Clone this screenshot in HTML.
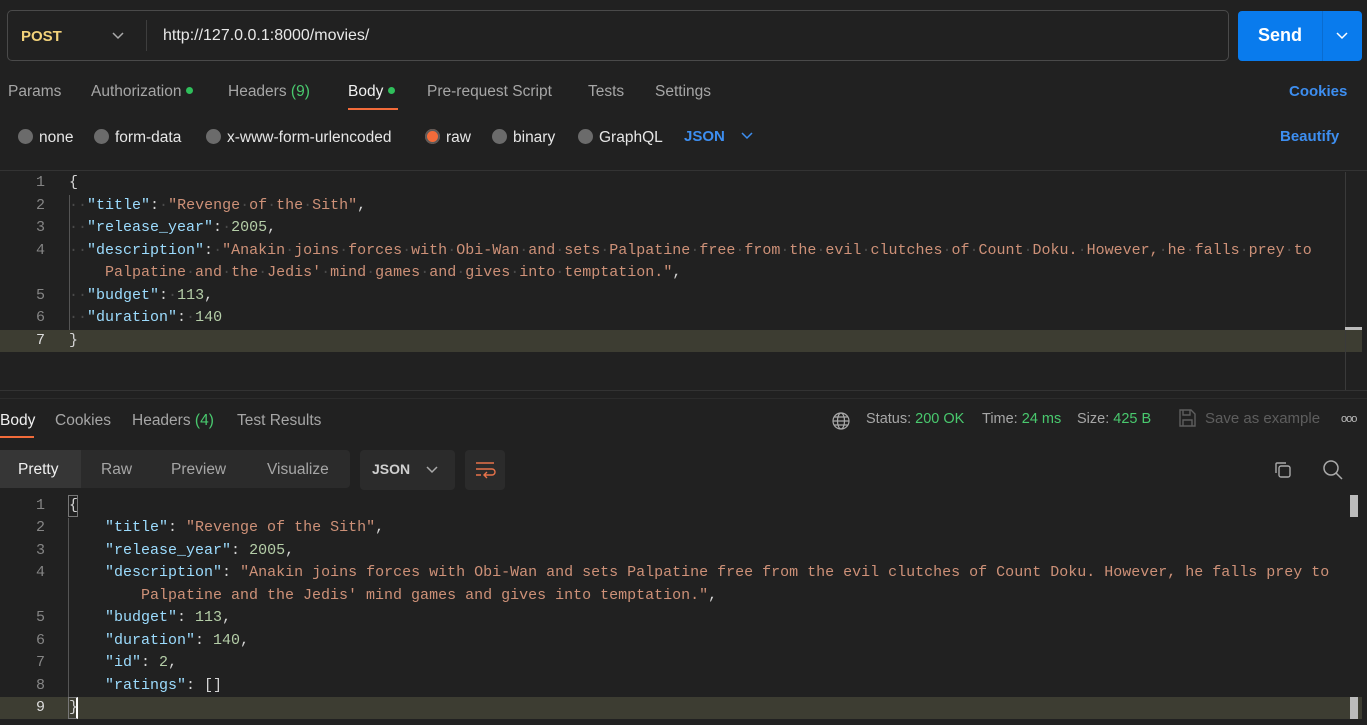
<!DOCTYPE html><html><head><style>
*{margin:0;padding:0;box-sizing:border-box}
body{width:1367px;height:725px;background:#212121;position:relative;overflow:hidden;font-family:"Liberation Sans",sans-serif;color:#a6a6a6;font-size:15.5px}
.a{position:absolute;white-space:pre}
.code{font-family:"Liberation Mono",monospace;font-size:15px;color:#d4d4d4}
.row{position:absolute;left:0;height:22.5px;line-height:22.5px;white-space:pre}
.ln{position:absolute;width:45px;text-align:right;color:#858585;font-family:"Liberation Mono",monospace;font-size:15px;height:22.5px;line-height:22.5px}
.k{color:#9cdcfe}.s{color:#ce9178}.n{color:#b5cea8}.d,.s i{color:#4a4a4a;font-style:normal}
.dot{display:inline-block;width:15px;height:15px;border-radius:50%;background:#6b6b6b;vertical-align:-2px;margin-right:6px}
.g{color:#49c96e}
</style></head><body>
<div class="a" style="left:7px;top:10px;width:1222px;height:51px;border:1px solid #4a4a4a;border-radius:5px"></div>
<div class="a" style="left:21px;top:28px;color:#f2d27a;font-weight:bold;font-size:15px">POST</div>
<svg class="a" style="left:111px;top:31px" width="14" height="10"><path d="M2 2l5 5 5-5" stroke="#aaa" stroke-width="1.5" fill="none"/></svg>
<div class="a" style="left:146px;top:20px;width:1px;height:31px;background:#3e3e3e"></div>
<div class="a" style="left:163px;top:27px;color:#e8e8e8;font-size:16px">http://127.0.0.1:8000/movies/</div>
<div class="a" style="left:1238px;top:11px;width:124px;height:50px;background:#097bed;border-radius:4px"></div>
<div class="a" style="left:1322px;top:11px;width:1px;height:50px;background:#0a6ccf"></div>
<div class="a" style="left:1258px;top:25px;color:#fff;font-weight:bold;font-size:18px">Send</div>
<svg class="a" style="left:1335px;top:31px" width="14" height="10"><path d="M2 2l5 5 5-5" stroke="#fff" stroke-width="1.5" fill="none"/></svg>
<div class="a" style="left:8px;top:83px">Params</div>
<div class="a" style="left:91px;top:83px">Authorization <span class="dot" style="width:7px;height:7px;background:#2fbf5b;vertical-align:2px"></span></div>
<div class="a" style="left:228px;top:83px">Headers <span class="g">(9)</span></div>
<div class="a" style="left:348px;top:83px;color:#f0f0f0">Body <span class="dot" style="width:7px;height:7px;background:#2fbf5b;vertical-align:2px"></span></div>
<div class="a" style="left:348px;top:108px;width:50px;height:2px;background:#f26b3a"></div>
<div class="a" style="left:427px;top:83px">Pre-request Script</div>
<div class="a" style="left:588px;top:83px">Tests</div>
<div class="a" style="left:655px;top:83px">Settings</div>
<div class="a" style="left:1289px;top:83px;color:#3d8ef0;font-weight:bold;font-size:15px">Cookies</div>
<div class="a" style="left:18px;top:129px;color:#e6e6e6"><span class="dot"></span>none</div>
<div class="a" style="left:94px;top:129px;color:#e6e6e6"><span class="dot"></span>form-data</div>
<div class="a" style="left:206px;top:129px;color:#e6e6e6"><span class="dot"></span>x-www-form-urlencoded</div>
<div class="a" style="left:425px;top:129px;color:#e6e6e6"><span class="dot" style="background:#f26b3a;box-shadow:0 0 0 2px #5a5a5a inset"></span>raw</div>
<div class="a" style="left:492px;top:129px;color:#e6e6e6"><span class="dot"></span>binary</div>
<div class="a" style="left:578px;top:129px;color:#e6e6e6"><span class="dot"></span>GraphQL</div>
<div class="a" style="left:684px;top:128px;color:#3d8ef0;font-weight:bold;font-size:15px">JSON</div>
<svg class="a" style="left:740px;top:131px" width="14" height="10"><path d="M2 2l5 5 5-5" stroke="#3d8ef0" stroke-width="1.5" fill="none"/></svg>
<div class="a" style="left:1280px;top:128px;color:#3d8ef0;font-weight:bold;font-size:15px">Beautify</div>
<div class="a" style="left:0;top:170px;width:1367px;height:1px;background:#333"></div>
<div class="a" style="left:0;top:390px;width:1367px;height:1px;background:#333"></div>
<div class="a" style="left:0;top:398px;width:1367px;height:1px;background:#2c2c2c"></div>
<div class="a" style="left:0;top:330px;width:1362px;height:22px;background:#3d3d32"></div>
<div class="a" style="left:1345px;top:172px;width:1px;height:218px;background:#3a3a3a"></div>
<div class="a" style="left:1345px;top:327px;width:17px;height:3px;background:#bbb"></div>
<div class="a" style="left:69px;top:195px;width:1px;height:135px;background:#555"></div>
<div class="code">
<div class="ln" style="top:172px">1</div><div class="ln" style="top:195px">2</div><div class="ln" style="top:217px">3</div><div class="ln" style="top:240px">4</div><div class="ln" style="top:285px">5</div><div class="ln" style="top:307px">6</div><div class="ln" style="top:330px;color:#ddd">7</div>
<div class="row" style="left:69px;top:172px">{</div>
<div class="row" style="left:69px;top:195px"><span class="d">··</span><span class="k">"title"</span>:<span class="d">·</span><span class="s">"Revenge<i>·</i>of<i>·</i>the<i>·</i>Sith"</span>,</div>
<div class="row" style="left:69px;top:217px"><span class="d">··</span><span class="k">"release_year"</span>:<span class="d">·</span><span class="n">2005</span>,</div>
<div class="row" style="left:69px;top:240px"><span class="d">··</span><span class="k">"description"</span>:<span class="d">·</span><span class="s">"Anakin<i>·</i>joins<i>·</i>forces<i>·</i>with<i>·</i>Obi-Wan<i>·</i>and<i>·</i>sets<i>·</i>Palpatine<i>·</i>free<i>·</i>from<i>·</i>the<i>·</i>evil<i>·</i>clutches<i>·</i>of<i>·</i>Count<i>·</i>Doku.<i>·</i>However,<i>·</i>he<i>·</i>falls<i>·</i>prey<i>·</i>to</span></div>
<div class="row" style="left:69px;top:262px">    <span class="s">Palpatine<i>·</i>and<i>·</i>the<i>·</i>Jedis'<i>·</i>mind<i>·</i>games<i>·</i>and<i>·</i>gives<i>·</i>into<i>·</i>temptation."</span>,</div>
<div class="row" style="left:69px;top:285px"><span class="d">··</span><span class="k">"budget"</span>:<span class="d">·</span><span class="n">113</span>,</div>
<div class="row" style="left:69px;top:307px"><span class="d">··</span><span class="k">"duration"</span>:<span class="d">·</span><span class="n">140</span></div>
<div class="row" style="left:69px;top:330px">}</div>
</div>
<div class="a" style="left:0;top:412px;color:#f0f0f0">Body</div>
<div class="a" style="left:0;top:436px;width:34px;height:2px;background:#f26b3a"></div>
<div class="a" style="left:55px;top:412px">Cookies</div>
<div class="a" style="left:132px;top:412px">Headers <span class="g">(4)</span></div>
<div class="a" style="left:237px;top:412px">Test Results</div>
<svg class="a" style="left:831px;top:411px" width="20" height="20" fill="none" stroke="#aaa" stroke-width="1.2"><circle cx="10" cy="10" r="8"/><ellipse cx="10" cy="10" rx="3.5" ry="8"/><path d="M2 10h16M3.5 6h13M3.5 14h13"/></svg>
<div class="a" style="left:866px;top:411px;font-size:14.5px">Status: <span class="g">200 OK</span></div>
<div class="a" style="left:982px;top:411px;font-size:14.5px">Time: <span class="g">24 ms</span></div>
<div class="a" style="left:1077px;top:411px;font-size:14.5px">Size: <span class="g">425 B</span></div>
<svg class="a" style="left:1177px;top:408px" width="20" height="20" fill="none" stroke="#5e5e5e" stroke-width="1.4"><path d="M3 2h11l4 4v12H3z M6 2v5h7V2 M6 18v-6h9v6"/></svg>
<div class="a" style="left:1205px;top:410px;color:#5e5e5e;font-size:15px">Save as example</div>
<div class="a" style="left:1341px;top:413px;color:#bbb;font-size:11px;letter-spacing:-1px">ooo</div>
<div class="a" style="left:0;top:450px;width:350px;height:38px;background:#2b2b2b;border-radius:0 4px 4px 0"></div>
<div class="a" style="left:0;top:450px;width:81px;height:38px;background:#363636"></div>
<div class="a" style="left:18px;top:461px;color:#f0f0f0">Pretty</div>
<div class="a" style="left:101px;top:461px">Raw</div>
<div class="a" style="left:171px;top:461px">Preview</div>
<div class="a" style="left:267px;top:461px">Visualize</div>
<div class="a" style="left:360px;top:450px;width:95px;height:40px;background:#2b2b2b;border-radius:4px"></div>
<div class="a" style="left:372px;top:461px;color:#cfcfcf;font-weight:bold;font-size:14px">JSON</div>
<svg class="a" style="left:425px;top:465px" width="14" height="10"><path d="M2 2l5 5 5-5" stroke="#aaa" stroke-width="1.5" fill="none"/></svg>
<div class="a" style="left:465px;top:450px;width:40px;height:40px;background:#2b2b2b;border-radius:4px"></div>
<svg class="a" style="left:474px;top:460px" width="22" height="20" fill="none" stroke="#e8734a" stroke-width="1.4"><path d="M2 3h18M2 9h16a3 3 0 0 1 0 6h-7M13 12l-3 3 3 3M2 15h5"/></svg>
<svg class="a" style="left:1273px;top:460px" width="20" height="20" fill="none" stroke="#aaa" stroke-width="1.4"><rect x="6" y="6" width="11" height="11" rx="2"/><path d="M3 13V4a1 1 0 0 1 1-1h9"/></svg>
<svg class="a" style="left:1322px;top:459px" width="22" height="22" fill="none" stroke="#aaa" stroke-width="1.5"><circle cx="9" cy="9" r="7"/><path d="M14 14l6 6"/></svg>
<div class="a" style="left:0;top:697px;width:1362px;height:22px;background:#3d3d32"></div>
<div class="a" style="left:1350px;top:495px;width:8px;height:22px;background:#bbb"></div>
<div class="a" style="left:1350px;top:697px;width:8px;height:22px;background:#bbb"></div>
<div class="a" style="left:68px;top:518px;width:1px;height:180px;background:#555"></div>
<div class="a" style="left:68px;top:495px;width:10px;height:22px;border:1px solid #777"></div>
<div class="a" style="left:68px;top:697px;width:10px;height:22px;border:1px solid #777;border-right:2px solid #fff"></div>
<div class="code">
<div class="ln" style="top:495px">1</div><div class="ln" style="top:517px">2</div><div class="ln" style="top:540px">3</div><div class="ln" style="top:562px">4</div><div class="ln" style="top:607px">5</div><div class="ln" style="top:630px">6</div><div class="ln" style="top:652px">7</div><div class="ln" style="top:675px">8</div><div class="ln" style="top:697px;color:#ddd">9</div>
<div class="row" style="left:69px;top:495px">{</div>
<div class="row" style="left:69px;top:517px">    <span class="k">"title"</span>: <span class="s">"Revenge of the Sith"</span>,</div>
<div class="row" style="left:69px;top:540px">    <span class="k">"release_year"</span>: <span class="n">2005</span>,</div>
<div class="row" style="left:69px;top:562px">    <span class="k">"description"</span>: <span class="s">"Anakin joins forces with Obi-Wan and sets Palpatine free from the evil clutches of Count Doku. However, he falls prey to</span></div>
<div class="row" style="left:69px;top:585px">        <span class="s">Palpatine and the Jedis' mind games and gives into temptation."</span>,</div>
<div class="row" style="left:69px;top:607px">    <span class="k">"budget"</span>: <span class="n">113</span>,</div>
<div class="row" style="left:69px;top:630px">    <span class="k">"duration"</span>: <span class="n">140</span>,</div>
<div class="row" style="left:69px;top:652px">    <span class="k">"id"</span>: <span class="n">2</span>,</div>
<div class="row" style="left:69px;top:675px">    <span class="k">"ratings"</span>: []</div>
<div class="row" style="left:69px;top:697px">}</div>
</div>
</body></html>
